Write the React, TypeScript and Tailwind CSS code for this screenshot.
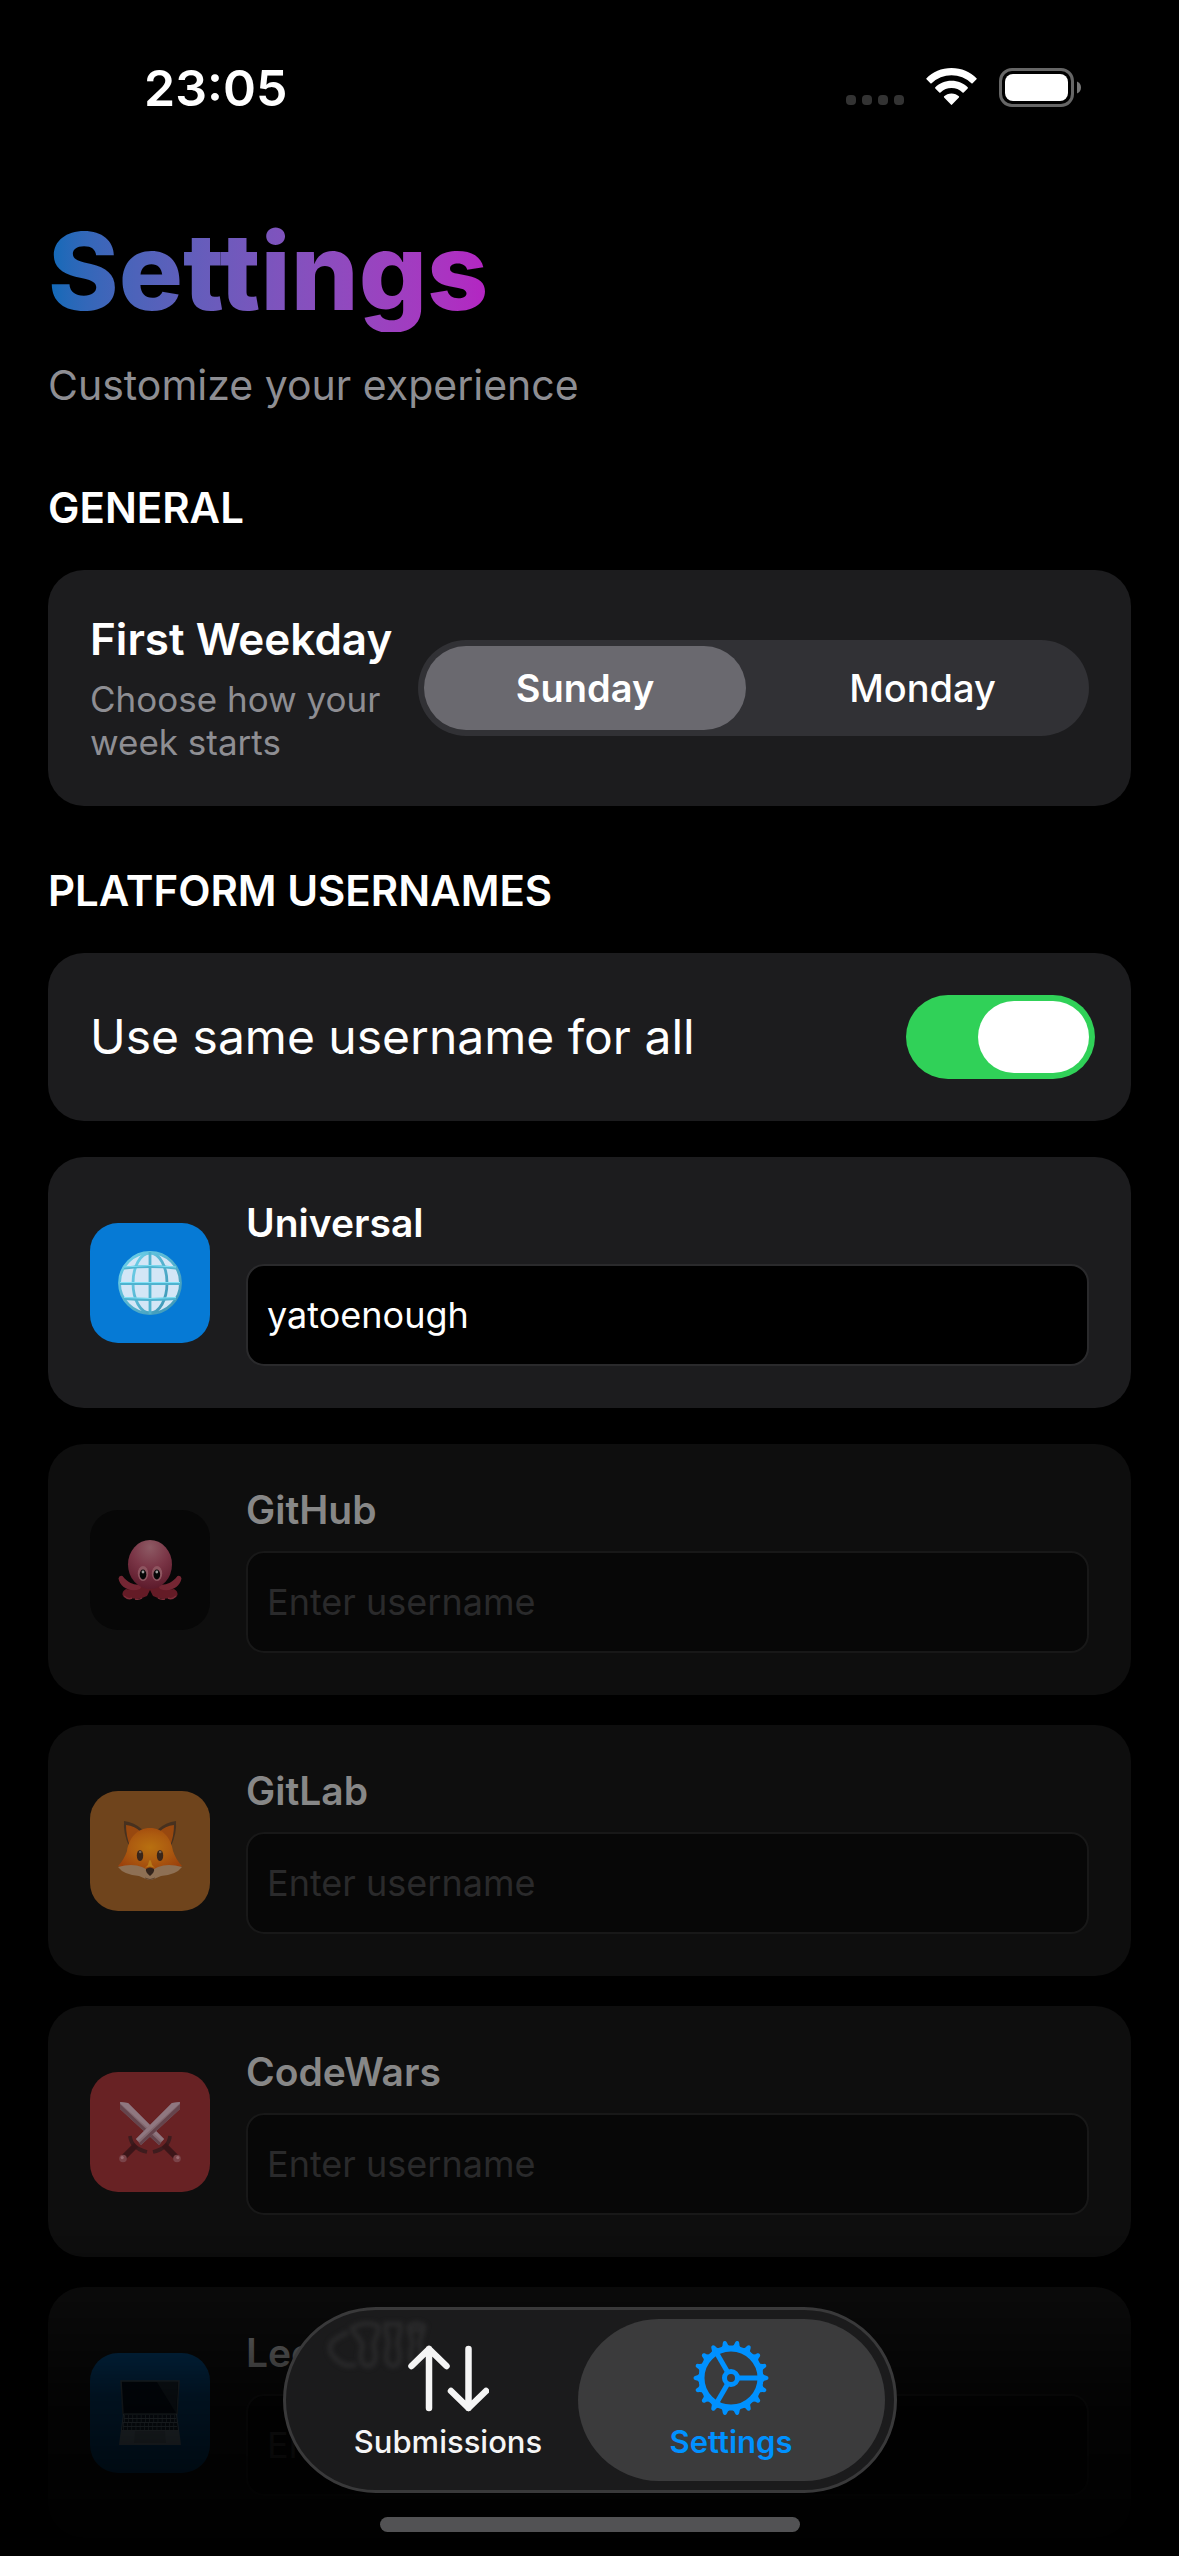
import { useState, type ReactNode } from "react";

function WifiIcon() {
  return (
    <svg viewBox="0 0 51 38" className="h-[38px] w-[51px]" fill="#fff" aria-hidden="true">
      <path d="M25.5 0C35.500 0 44.400 3.900 50.500 10.200Q51 10.800 50.500 11.300L46.600 15.300Q46 15.800 45.400 15.300A28.500 28.500 0 0 0 5.600 15.300Q5 15.800 4.400 15.300L.5 11.300Q0 10.800.5 10.200C6.600 3.900 15.500 0 25.500 0Z" />
      <path d="M25.500 12.800C31.900 12.800 37.600 15.300 41.700 19.300Q42.200 19.900 41.700 20.400L37.700 24.400Q37.100 24.900 36.500 24.400A16 16 0 0 0 14.500 24.400Q13.900 24.900 13.300 24.400L9.300 20.400Q8.800 19.900 9.300 19.300C13.400 15.300 19.100 12.800 25.500 12.800Z" />
      <path d="M25.500 25.500C28.500 25.500 31 26.600 32.900 28.300Q33.400 28.900 32.900 29.400L26.100 36.600Q25.500 37.200 24.900 36.600L18.100 29.400Q17.600 28.900 18.100 28.300C20 26.600 22.500 25.500 25.500 25.500Z" />
    </svg>
  );
}

function BatteryIcon() {
  return (
    <svg viewBox="0 0 82 39" className="h-[39px] w-[82px]" aria-hidden="true">
      <rect x="1.500" y="1.500" width="72" height="36" rx="11.500" fill="none" stroke="#666" strokeWidth="3" />
      <rect x="6" y="6" width="63" height="27" rx="8" fill="#fff" />
      <path d="M78 13.500C80.500 14.500 82 16.800 82 19.500S80.500 24.500 78 25.500Z" fill="#777" />
    </svg>
  );
}

function GlobeArt() {
  return (
    <svg viewBox="0 0 64 64" className="size-16" fill="none" aria-hidden="true">
      <defs>
        <linearGradient id="wire" x1="0" y1="0" x2="1" y2="1">
          <stop offset="0" stopColor="#6fd3ec" />
          <stop offset="1" stopColor="#3b93b3" />
        </linearGradient>
      </defs>
      <circle cx="32" cy="32" r="30" fill="#d3e6f6" />
      <g stroke="url(#wire)" strokeWidth="2.800">
        <circle cx="32" cy="32" r="30.500" />
        <ellipse cx="32" cy="32" rx="17" ry="30" />
      </g>
      <path d="M32 1V63" stroke="#4fb3cf" strokeWidth="2.800" />
      <g stroke="#4fb3cf" strokeWidth="2.800">
        <path d="M6 17Q32 14 58 17M2 32.500H62M6 47.500Q32 49.500 58 47.500" />
      </g>
      <path d="M6 16Q32 13 58 16M2 31.500H62M6 46.500Q32 48.500 58 46.500" stroke="#83e2f6" strokeWidth="1" />
    </svg>
  );
}

function OctopusArt() {
  return (
    <svg viewBox="0 0 64 64" className="size-16" aria-hidden="true">
      <defs>
        <radialGradient id="octo" cx=".5" cy=".15" r=".85">
          <stop offset="0" stopColor="#8d5a64" />
          <stop offset=".5" stopColor="#7a3546" />
          <stop offset="1" stopColor="#5d1b2c" />
        </radialGradient>
      </defs>
      <path
        d="M28 50C22 46 16 53 8 51Q4 53 4.500 57Q7 61 12 60Q22 62 29 58L32 52L35 58Q42 62 52 60Q57 61 59.500 57Q60 53 56 51C48 53 42 46 36 50Z"
        fill="#641b26"
      />
      <path
        d="M6 58Q10 62 14 60M17 61Q21 62 24 60M58 58Q54 62 50 60M47 61Q43 62 40 60"
        stroke="#7c2c38"
        strokeWidth="1.500"
        fill="none"
      />
      <path
        d="M25 46C18 48 11 46 4.500 38Q1 37 .5 40.500C2 49 12 55 22 51ZM39 46C46 48 53 46 59.500 38Q63 37 63.500 40.500C62 49 52 55 42 51Z"
        fill="#742633"
      />
      <ellipse cx="32" cy="26.500" rx="22" ry="24.500" fill="url(#octo)" />
      <ellipse cx="25" cy="35.500" rx="5.200" ry="7.500" fill="#8e5560" />
      <ellipse cx="39" cy="35.500" rx="5.200" ry="7.500" fill="#8e5560" />
      <ellipse cx="25" cy="36.500" rx="3.300" ry="5" fill="#060606" />
      <ellipse cx="38.800" cy="36.500" rx="3.300" ry="5" fill="#060606" />
      <circle cx="25" cy="34" r="1.400" fill="#9a9a9a" />
      <circle cx="38.800" cy="34" r="1.400" fill="#9a9a9a" />
    </svg>
  );
}

function FoxArt() {
  return (
    <svg viewBox="0 0 64 64" className="size-16" aria-hidden="true">
      <defs>
        <radialGradient id="fox" cx=".5" cy=".45" r=".6">
          <stop offset="0" stopColor="#b87010" />
          <stop offset=".5" stopColor="#ad5c10" />
          <stop offset="1" stopColor="#9c410c" />
        </radialGradient>
      </defs>
      <path d="M6 2Q16 3 25 11L11 27Q5 14 6 2ZM58 2Q48 3 39 11L53 27Q59 14 58 2Z" fill="#47311f" />
      <path d="M8 6Q17 7 23 13L12 27Q8 17 8 6ZM56 6Q47 7 41 13L52 27Q56 17 56 6Z" fill="#98480f" />
      <path d="M32 9C19 9 11 19 9 32Q6 41 0 47Q12 51 32 52Q52 51 64 47Q58 41 55 32C53 19 45 9 32 9Z" fill="url(#fox)" />
      <path d="M0 48Q14 44 24 48Q32 53 40 48Q50 44 64 48Q58 56 43 57L36 60Q32 61 28 60L21 57Q6 56 0 48Z" fill="#8e7054" />
      <path d="M27 49Q32 46 37 49L34 46Q32 36 30 46Z" fill="#b87b18" />
      <path d="M28 50Q32 47 36 50Q37 53 32 57Q27 53 28 50Z" fill="#33241c" />
      <path d="M27 59Q32 62 37 59" stroke="#604632" strokeWidth="1" fill="none" />
      <ellipse cx="22" cy="36.500" rx="3.200" ry="5.600" fill="#3a261a" />
      <ellipse cx="42" cy="36.500" rx="3.200" ry="5.600" fill="#3a261a" />
      <circle cx="22.200" cy="33" r="1.300" fill="#7b6652" />
      <circle cx="42.200" cy="33" r="1.300" fill="#7b6652" />
    </svg>
  );
}

function SwordsArt() {
  const sword = (
    <>
      <path d="M62 2L54 3L18 39L23 45L62 9Z" fill="#82686f" />
      <path d="M62 4L21 43L23 45L62 9Z" fill="#65444c" />
      <path d="M62 2L54 3L18 39L20 41L61 4Z" fill="#8f7780" />
      <path d="M12 36Q13 48 29 52" stroke="#3e1c1e" strokeWidth="3.600" fill="none" />
      <path d="M18 45L6 57" stroke="#3b1518" strokeWidth="6" />
      <circle cx="5" cy="58.500" r="3.800" fill="#7a4348" />
      <circle cx="4.200" cy="57.600" r="1.600" fill="#9a6a70" />
    </>
  );
  return (
    <svg viewBox="0 0 64 64" className="size-16" aria-hidden="true">
      <g transform="translate(64 0) scale(-1 1)">{sword}</g>
      {sword}
    </svg>
  );
}

function LaptopArt() {
  return (
    <svg viewBox="0 0 64 66" className="h-[66px] w-16" aria-hidden="true">
      <path d="M3 1H61L59 34H5Z" fill="#040e18" stroke="#39454d" strokeWidth="1.500" />
      <path d="M39 2H60L58 33Z" fill="#18242d" />
      <path d="M5 34H59L63 65H1Z" fill="#586873" />
      <path d="M6 34.500H58L60 50H4Z" fill="#101d29" />
      <g stroke="#566570" strokeWidth="1">
        <path d="M6 38.500H58M5 42.500H59M5 46.500H59" />
        <path d="M6 36.500H58M6 40.500H58M5 44.500H59M5 48.500H59" strokeWidth="3" strokeDasharray=".7 3.500" />
      </g>
      <path d="M17 51H47L48 63H16Z" fill="#4a5963" />
    </svg>
  );
}

function SubmissionsIcon() {
  return (
    <svg
      viewBox="0 0 82 76"
      className="h-[76px] w-[82px]"
      fill="none"
      stroke="currentColor"
      strokeWidth="6.500"
      strokeLinecap="round"
      strokeLinejoin="round"
      aria-hidden="true"
    >
      <path d="M22 9V68M4.500 26L22 9L39.500 26M61.500 9V68M44 51L61.500 68L79 51" />
    </svg>
  );
}

const toothAngles = Array.from({ length: 18 }, (_, i) => i * 20);

function GearIcon() {
  return (
    <svg viewBox="-38 -38 76 76" className="size-[76px]" fill="none" stroke="currentColor" aria-hidden="true">
      <circle r="29.500" strokeWidth="6" />
      <circle r="6.500" strokeWidth="5" />
      {[0, 120, 240].map((a) => (
        <path key={a} d="M8 0H28" strokeWidth="5" transform={`rotate(${a})`} />
      ))}
      {toothAngles.map((a) => (
        <path
          key={a}
          d="M31 -5Q33 -2.200 36 -2Q37.500 -1.500 37.500 0T36 2Q33 2.200 31 5Z"
          fill="currentColor"
          stroke="none"
          transform={`rotate(${a})`}
        />
      ))}
    </svg>
  );
}

/* Soft light smear refracted through the glass of the tab bar. */
function GlassSmear() {
  return (
    <svg
      viewBox="0 0 110 60"
      className="absolute top-[6px] left-[36px] h-[60px] w-[110px] blur-[2px]"
      fill="none"
      stroke="#29292a"
      strokeWidth="5"
      aria-hidden="true"
    >
      <path d="M34 48C22 54 8 40 8 32S16 22 26 16" />
      <path d="M30 12Q44 4 56 10C58 20 50 22 52 32C56 46 50 50 46 50S36 46 40 32C42 24 32 20 30 12Z" />
      <path d="M64 8H78C80 20 74 22 76 30C80 44 76 50 71 50S62 44 66 30C68 22 62 18 64 8Z" />
      <path d="M87 10Q94 5 102 10C102 20 96 22 98 30C102 42 98 48 94 48S86 42 90 30C92 22 86 18 87 10ZM88 14H101" />
    </svg>
  );
}

function StatusBar() {
  return (
    <header className="flex h-[174px] items-center justify-between pl-[144px] pr-[98px]">
      <time className="pt-[2px] text-[50px] leading-[60px] font-semibold text-white">23:05</time>
      <div className="flex items-center gap-[22px]">
        <div className="flex gap-1.5 pt-[26px]" aria-hidden="true">
          {[0, 1, 2, 3].map((i) => (
            <span key={i} className="size-2.5 rounded-[4px] bg-[#333]" />
          ))}
        </div>
        <div className="flex items-center gap-[22px]">
          <WifiIcon />
          <BatteryIcon />
        </div>
      </div>
    </header>
  );
}

type Platform = { id: string; name: string; tile: string; art: ReactNode };

const platforms: Platform[] = [
  { id: "github", name: "GitHub", tile: "bg-[#070707]", art: <OctopusArt /> },
  { id: "gitlab", name: "GitLab", tile: "bg-[#6f441c]", art: <FoxArt /> },
  { id: "codewars", name: "CodeWars", tile: "bg-[#682224]", art: <SwordsArt /> },
  { id: "leetcode", name: "LeetCode", tile: "bg-[#043a66]", art: <LaptopArt /> },
];

function PlatformCard({ platform, active }: { platform: Platform; active?: boolean }) {
  return (
    <div
      className={`flex items-center gap-9 rounded-[36px] p-[42px] ${active ? "bg-[#1c1c1e]" : "bg-[#0e0e0e]"}`}
    >
      <div className={`flex size-[120px] shrink-0 items-center justify-center rounded-[28px] ${platform.tile}`}>
        {platform.art}
      </div>
      <div className="flex min-w-0 flex-1 flex-col gap-[18px]">
        <label
          htmlFor={platform.id}
          className={`text-[39px] leading-[47px] font-semibold ${active ? "text-white" : "text-[#878787]"}`}
        >
          {platform.name}
        </label>
        <input
          id={platform.id}
          type="text"
          disabled={!active}
          defaultValue={active ? "yatoenough" : undefined}
          placeholder="Enter username"
          className={`h-[102px] w-full rounded-[18px] border-2 px-[19px] text-[36px] leading-[44px] outline-none ${
            active
              ? "border-[#2a2a2c] bg-black text-white"
              : "border-[#181818] bg-[#070707] placeholder:text-[#2a2a2b]"
          }`}
        />
      </div>
    </div>
  );
}

export default function App() {
  const [weekday, setWeekday] = useState("Sunday");
  const [same, setSame] = useState(true);

  return (
    <div className="min-h-screen bg-black pb-[18px] font-['Inter',sans-serif] text-white">
      <StatusBar />
      <main className="px-[48px] pt-[36px]">
        <h1 className="w-fit bg-linear-to-r from-[#0a6ab8] to-[#b424c2] bg-clip-text text-[107px] leading-[122px] font-extrabold text-transparent">
          Settings
        </h1>
        <p className="mt-[26px] text-[41px] leading-[54px] text-[#8e8e93]">Customize your experience</p>

        <section className="mt-[70px]">
          <h2 className="text-[42px] leading-[52px] font-semibold">GENERAL</h2>
          <div className="mt-[36px] flex items-center gap-[26px] rounded-[36px] bg-[#1c1c1e] p-[42px]">
            <div className="flex-1">
              <h3 className="text-[44px] leading-[54px] font-semibold whitespace-nowrap">First Weekday</h3>
              <p className="mt-[12px] text-[35px] leading-[43px] text-[#8e8e93]">Choose how your week starts</p>
            </div>
            <div className="flex h-24 w-[671px] shrink-0 gap-4 rounded-full bg-[#313135] p-1.5">
              {["Sunday", "Monday"].map((day) => (
                <button
                  key={day}
                  type="button"
                  aria-pressed={weekday === day}
                  onClick={() => setWeekday(day)}
                  className={`flex-1 rounded-full text-[38px] leading-[47px] ${
                    weekday === day ? "bg-[#6a696f] font-semibold" : "font-medium"
                  }`}
                >
                  {day}
                </button>
              ))}
            </div>
          </div>
        </section>

        <section className="mt-[59px]">
          <h2 className="text-[42px] leading-[52px] font-semibold">PLATFORM USERNAMES</h2>
          <div className="mt-[36px] flex h-[168px] items-center justify-between rounded-[36px] bg-[#1c1c1e] pr-[36px] pl-[42px]">
            <label htmlFor="same" className="text-[48px] leading-[62px]">
              Use same username for all
            </label>
            <input
              id="same"
              type="checkbox"
              role="switch"
              checked={same}
              onChange={(e) => setSame(e.target.checked)}
              className="flex h-[84px] w-[189px] shrink-0 appearance-none rounded-full bg-[#39393d] p-1.5 before:h-[72px] before:w-[111px] before:rounded-full before:bg-white before:content-[''] checked:justify-end checked:bg-[#30d158]"
            />
          </div>
          <div className="mt-[36px]">
            <PlatformCard
              active
              platform={{ id: "universal", name: "Universal", tile: "bg-[#067ad5]", art: <GlobeArt /> }}
            />
          </div>
          <div className="mt-[36px] flex flex-col gap-[30px]">
            {platforms.map((p) => (
              <PlatformCard key={p.id} platform={p} />
            ))}
          </div>
        </section>
      </main>

      <div className="pointer-events-none fixed inset-x-0 bottom-0 h-[320px] bg-linear-to-b from-transparent via-black/70 to-black/95" />
      <div className="fixed inset-x-0 bottom-0 flex flex-col items-center gap-6 pb-6">
        <nav className="relative flex h-[186px] w-[614px] overflow-hidden rounded-full border-3 border-[#39393a] bg-[#1b1b1c] p-[9px]">
          <GlassSmear />
          <a
            href="#submissions"
            className="relative flex w-[307px] shrink-0 flex-col items-center pt-[21px] text-[#f5f5f5]"
          >
            <SubmissionsIcon />
            <span className="mt-[8px] text-[31px] leading-[36px] font-medium">Submissions</span>
          </a>
          <a
            href="#settings"
            aria-current="page"
            className="-ml-6 flex w-[307px] shrink-0 flex-col items-center rounded-full bg-[#3b3b3c] pt-[21px] text-[#0091ff]"
          >
            <GearIcon />
            <span className="mt-[8px] text-[31px] leading-[36px] font-semibold">Settings</span>
          </a>
        </nav>
        <div className="h-[15px] w-[420px] rounded-full bg-[#525254]" />
      </div>
    </div>
  );
}
